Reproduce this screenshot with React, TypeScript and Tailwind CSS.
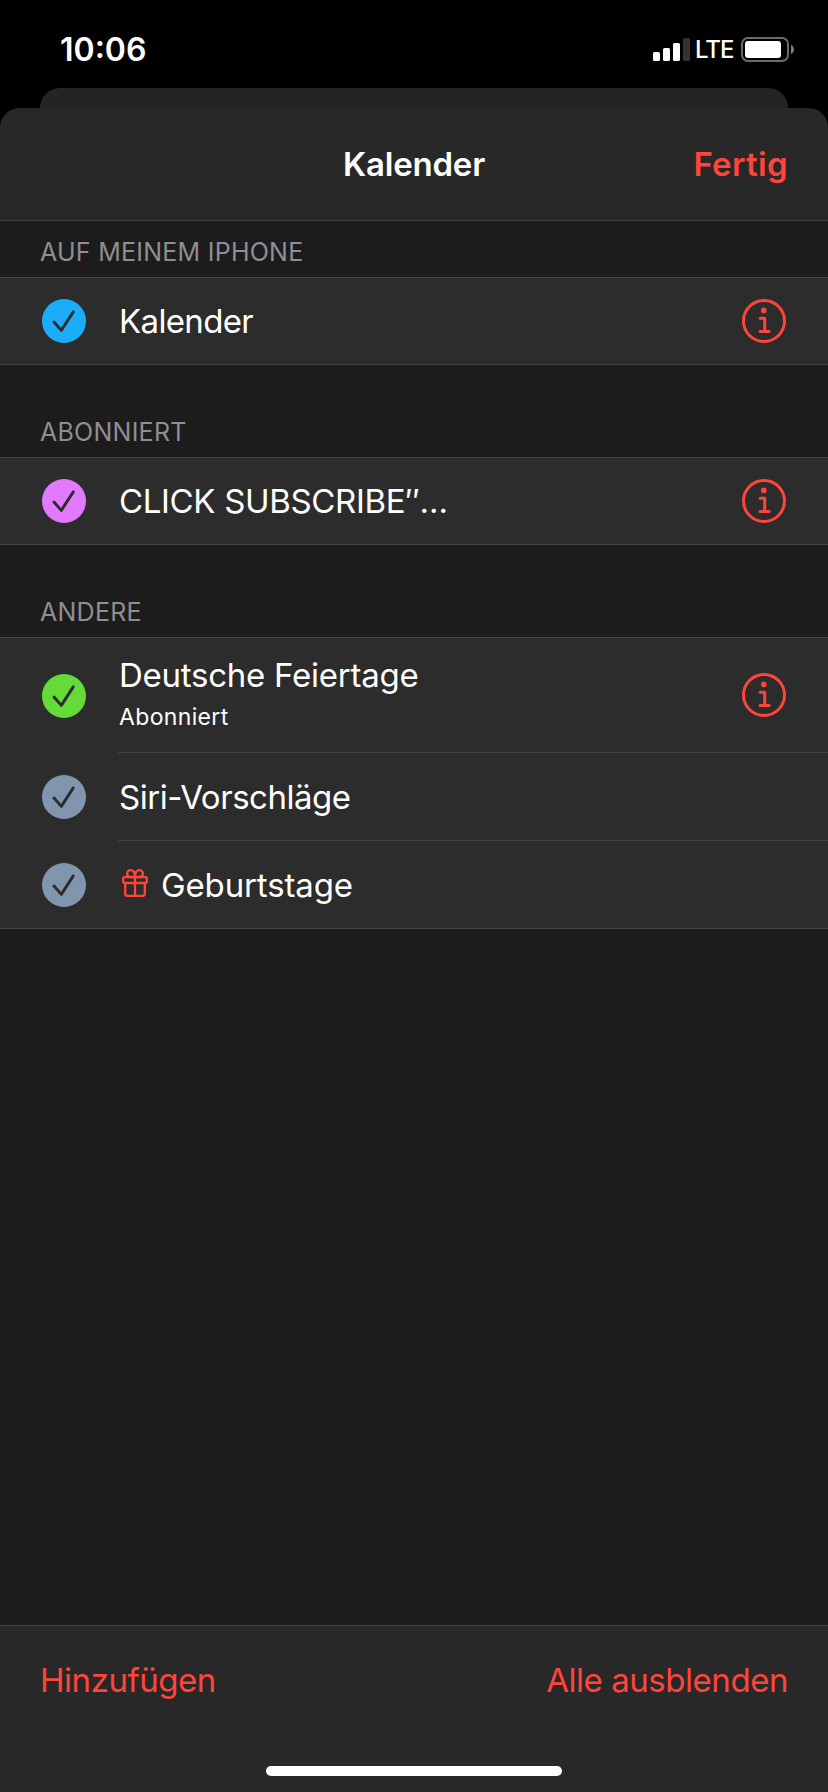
import clsx from 'clsx'

type CalendarItem = {
  name: string
  subtitle?: string
  color: string
  tracking: string
  height: string
  hasInfo?: boolean
  hasGift?: boolean
}

type CalendarGroup = {
  title: string
  items: CalendarItem[]
}

const groups: CalendarGroup[] = [
  {
    title: 'AUF MEINEM IPHONE',
    items: [
      {
        name: 'Kalender',
        color: 'text-[#1badf8]',
        tracking: 'tracking-[-0.65px]',
        height: 'h-[86px]',
        hasInfo: true
      }
    ]
  },
  {
    title: 'ABONNIERT',
    items: [
      {
        name: 'CLICK SUBSCRIBE″…',
        color: 'text-[#e27aff]',
        tracking: 'tracking-[-0.34px]',
        height: 'h-[86px]',
        hasInfo: true
      }
    ]
  },
  {
    title: 'ANDERE',
    items: [
      {
        name: 'Deutsche Feiertage',
        subtitle: 'Abonniert',
        color: 'text-[#65db39]',
        tracking: 'tracking-[-0.25px]',
        height: 'h-[115px]',
        hasInfo: true
      },
      {
        name: 'Siri-Vorschläge',
        color: 'text-[#8295af]',
        tracking: 'tracking-[-0.47px]',
        height: 'h-[88px]'
      },
      {
        name: 'Geburtstage',
        color: 'text-[#8295af]',
        tracking: 'tracking-[-0.13px]',
        height: 'h-[87px]',
        hasGift: true
      }
    ]
  }
]

const CheckIcon = ({ className }: { className: string }) => (
  <svg viewBox="0 0 44 44" className={clsx('size-11 shrink-0', className)} fill="none">
    <circle cx="22" cy="22" r="22" fill="currentColor" />
    <path
      d="M12 23L19.3 31.4L31.3 12.9"
      stroke="#2c2c2c"
      strokeWidth="2.9"
      strokeLinecap="round"
      strokeLinejoin="round"
    />
  </svg>
)

const InfoIcon = () => (
  <svg viewBox="0 0 44 44" className="size-11 shrink-0 text-[#ff453a]" fill="none" stroke="currentColor">
    <circle cx="22" cy="22" r="20.5" strokeWidth="3" />
    <circle cx="21.8" cy="11.4" r="2.8" fill="currentColor" stroke="none" />
    <path d="M18.2 19.3H22.7V32.4M18 32.5H27.2" strokeWidth="3" strokeLinecap="round" strokeLinejoin="round" />
  </svg>
)

const GiftIcon = () => (
  <svg
    viewBox="0 0 26 28"
    className="mb-1 ml-[3px] mr-[13px] h-7 w-[26px] shrink-0 text-[#ff453a]"
    fill="none"
    stroke="currentColor"
    strokeWidth="2.3"
    strokeLinejoin="round"
  >
    <rect x="1.2" y="8.2" width="23.6" height="5.8" rx="1.6" />
    <path d="M3.2 14V24.4Q3.2 26.8 5.6 26.8H20.4Q22.8 26.8 22.8 24.4V14" />
    <path d="M13 8V27" />
    <path d="M13 8H8.5C5.8 8 5.1 6.4 5.1 4.7C5.1 2.7 6.5 1.2 8.6 1.2C11.3 1.2 13 3.6 13 8ZM13 8H17.5C20.2 8 20.9 6.4 20.9 4.7C20.9 2.7 19.5 1.2 17.4 1.2C14.7 1.2 13 3.6 13 8Z" />
  </svg>
)

const SignalIcon = () => (
  <svg viewBox="0 0 37 23" className="h-[23px] w-[37px]" fill="#fff">
    <rect x="0" y="14" width="7" height="9" rx="1.5" />
    <rect x="10" y="10" width="7" height="13" rx="1.5" />
    <rect x="20" y="5" width="7" height="18" rx="1.5" />
    <rect x="30" y="0" width="7" height="23" rx="1.5" fill="#333" />
  </svg>
)

const BatteryIcon = () => (
  <svg viewBox="0 0 53 25" className="h-[25px] w-[53px]">
    <rect x="1" y="1" width="46" height="23" rx="6" fill="none" stroke="#6b6b6b" strokeWidth="2" />
    <rect x="4" y="4" width="36" height="17" rx="3" fill="#fff" />
    <path d="M50 8C52.1 9 53 10.6 53 12.5C53 14.4 52.1 16 50 17Z" fill="#808080" />
  </svg>
)

const StatusBar = () => (
  <div className="flex h-[88px] justify-between pl-[60px] pr-[34px] text-white">
    <span className="pt-[30px] text-[32px] font-semibold leading-10">10:06</span>
    <div className="flex items-start">
      <div className="pt-[38px]">
        <SignalIcon />
      </div>
      <span className="w-[51px] pl-[5px] pt-[34px] text-2xl font-medium tracking-[-1px]">LTE</span>
      <div className="pt-[37px]">
        <BatteryIcon />
      </div>
    </div>
  </div>
)

const CalendarRow = ({ item, isLast }: { item: CalendarItem; isLast: boolean }) => (
  <div className={clsx('flex pl-[42px]', item.height)}>
    <div className="flex items-center">
      <CheckIcon className={item.color} />
    </div>
    <div
      className={clsx(
        'ml-8 flex flex-1 items-center justify-between border-[#424242] pr-[42px]',
        !isLast && 'border-b'
      )}
    >
      <div className={clsx('pl-px text-white', item.subtitle && 'pb-0.5')}>
        <div className={clsx('flex items-center text-[33px] leading-10', item.tracking)}>
          {item.hasGift && <GiftIcon />}
          <span>{item.name}</span>
        </div>
        {item.subtitle && (
          <div className="pt-1.5 text-[23px] leading-8 tracking-[0.35px]">{item.subtitle}</div>
        )}
      </div>
      {item.hasInfo && <InfoIcon />}
    </div>
  </div>
)

const Group = ({ group, isFirst }: { group: CalendarGroup; isFirst: boolean }) => (
  <section>
    <h2
      className={clsx(
        'flex items-end pb-2.5 pl-10 text-[25px] leading-[30px] tracking-[0.25px] text-[#8e8e93]',
        isFirst ? 'h-14' : 'h-[92px]'
      )}
    >
      {group.title}
    </h2>
    <div className="border-y border-[#424242] bg-[#2c2c2c]">
      {group.items.map((item, index) => (
        <CalendarRow key={item.name} item={item} isLast={index === group.items.length - 1} />
      ))}
    </div>
  </section>
)

export default function App() {
  return (
    <div className="flex h-[1792px] w-[828px] flex-col overflow-hidden bg-black font-[Inter,'Liberation_Sans',sans-serif]">
      <StatusBar />
      <div className="mx-10 h-5 rounded-t-[20px] bg-[#242424]" />

      <div className="flex flex-1 flex-col overflow-hidden rounded-t-[20px] bg-[#1c1c1c]">
        <header className="grid h-[113px] grid-cols-3 items-center border-b border-[#424242] bg-[#282828] px-10 text-[33px] font-semibold leading-10">
          <h1 className="col-start-2 text-center tracking-[-0.2px] text-white">Kalender</h1>
          <button className="text-right tracking-[0.35px] text-[#ff453a]">Fertig</button>
        </header>

        <main className="flex-1">
          {groups.map((group, index) => (
            <Group key={group.title} group={group} isFirst={index === 0} />
          ))}
        </main>

        <footer className="flex h-[167px] flex-col items-center justify-between border-t border-[#424242] bg-[#282828] pb-4 pt-[34px]">
          <div className="flex w-full justify-between px-10 text-[33px] leading-10 text-[#ff453a]">
            <button className="tracking-[-0.46px]">Hinzufügen</button>
            <button className="tracking-[-0.45px]">Alle ausblenden</button>
          </div>
          <div className="h-2.5 w-[296px] rounded-full bg-white" />
        </footer>
      </div>
    </div>
  )
}
